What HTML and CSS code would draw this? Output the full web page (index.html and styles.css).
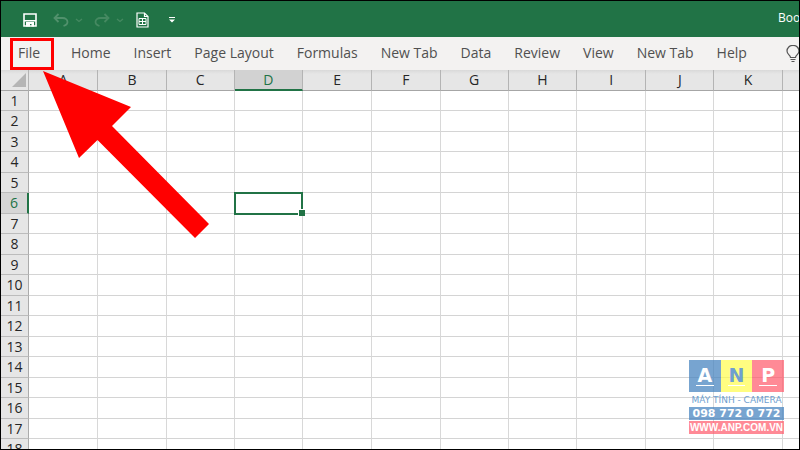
FILE: index.html
```html
<!DOCTYPE html>
<html lang="en">
<head>
<meta charset="utf-8">
<title>Spreadsheet</title>
<link rel="stylesheet" href="styles.css">
</head>
<body>
<div class="window">
  <header class="titlebar">
    <div class="quick">
      <button class="tool save" aria-label="Save"><svg width="14" height="14" viewBox="0 0 14 14"><path d="M1 1h12v12H1z" fill="none" stroke="#fff" stroke-width="1.600"/><path d="M1 7h12v1.500H1zM3 9h8v4.500H8.500V11H7v2.500H3z" fill="#fff"/></svg></button>
      <button class="tool undo" aria-label="Undo"><svg width="16" height="14" viewBox="0 0 16 14"><path d="M5.500 1L1.500 5l4 4M2 5h7.500c3 0 5 1.800 5 4 0 1.800-1.500 3.200-4 4" fill="none" stroke="#51916c" stroke-width="1.800"/></svg></button>
      <button class="tool more" aria-label="Undo list"><svg width="8" height="5" viewBox="0 0 8 5"><path d="M1 1l3 2.500L7 1" fill="none" stroke="#458961" stroke-width="1.300"/></svg></button>
      <button class="tool redo" aria-label="Redo"><svg width="16" height="14" viewBox="0 0 16 14"><path d="M10.500 1l4 4-4 4M14 5H6.500c-3 0-5 1.800-5 4 0 1.800 1.500 3.200 4 4" fill="none" stroke="#458961" stroke-width="1.800"/></svg></button>
      <button class="tool more" aria-label="Redo list"><svg width="8" height="5" viewBox="0 0 8 5"><path d="M1 1l3 2.500L7 1" fill="none" stroke="#458961" stroke-width="1.300"/></svg></button>
      <button class="tool new" aria-label="Sheet"><svg width="13" height="16" viewBox="0 0 13 16"><path d="M1 1h7.500L12 4.500V15H1zM8.500 1v3.500H12" fill="none" stroke="#fff" stroke-width="1.200"/><path d="M3 6.500h7v6H3zM3 9.500h7M6.500 6.500v6" fill="none" stroke="#fff"/></svg></button>
      <button class="tool custom" aria-label="Customize toolbar"><svg width="6" height="6" viewBox="0 0 6 6"><path d="M0 0h6v1H0zM0 2.500h6L3 5.500z" fill="#fff"/></svg></button>
    </div>
    <span class="book">Boo</span>
  </header>
  <nav class="ribbon">
    <button class="tab file">File</button>
    <button class="tab">Home</button>
    <button class="tab">Insert</button>
    <button class="tab">Page Layout</button>
    <button class="tab">Formulas</button>
    <button class="tab">New Tab</button>
    <button class="tab">Data</button>
    <button class="tab">Review</button>
    <button class="tab">View</button>
    <button class="tab">New Tab</button>
    <button class="tab">Help</button>
    <button class="tool bulb" aria-label="Tell me"><svg width="14" height="18" viewBox="0 0 14 18"><path d="M4.500 12.500C4.500 10 1 9.500 1 6a5.500 5.200 0 0 1 12 0c0 3.500-3.500 4-3.500 6.500zM4.500 14.500h5M5.500 16.500h3" fill="none" stroke="#555" stroke-width="1.200"/></svg></button>
  </nav>
  <main class="sheet">
    <table class="grid">
      <thead><tr><th class="corner"><svg width="14" height="14" viewBox="0 0 14 14"><path d="M14 0v14H0z" fill="#b5b5b5"/></svg></th><th>A</th><th>B</th><th>C</th><th class="current">D</th><th>E</th><th>F</th><th>G</th><th>H</th><th>I</th><th>J</th><th>K</th><th></th></tr></thead>
      <tbody id="rows"></tbody>
    </table>
  </main>
  <svg class="arrow" width="170" height="170" viewBox="0 0 170 170" aria-hidden="true"><path d="M0 0L88 36 69 55 166 153 152 167 54.500 69 36 87z" fill="#f00"/></svg>
  <aside class="brand">
    <div class="blocks"><span class="a"><b>A</b></span><span class="n"><b>N</b></span><span class="p"><b>P</b></span></div>
    <div class="tagline">MÁY TÍNH - CAMERA</div>
    <div class="phone">098 772 0 772</div>
    <div class="site">WWW.ANP.COM.VN</div>
  </aside>
</div>
<script src="script.js"></script>
</body>
</html>
```
FILE: styles.css
```css
* { box-sizing: border-box; }

body {
  margin: 0;
  background: #000;
  font-family: "Open Sans", "Noto Sans", sans-serif;
}

button {
  padding: 0;
  border: 0;
  background: none;
  font: inherit;
  color: inherit;
}

.window {
  position: relative;
  display: flex;
  flex-direction: column;
  height: 100vh;
  border: 1px solid #000;
  overflow: hidden;
  background: #fff;
}

.titlebar {
  display: flex;
  flex: none;
  align-items: center;
  justify-content: space-between;
  height: 36px;
  padding-left: 22px;
  background: #217346;
  color: #fff;
}

.quick {
  display: flex;
  align-items: center;
  padding-top: 2px;
}

.tool { display: flex; flex: none; }
.undo { margin-left: 16px; }
.more { margin-left: 6px; }
.redo { margin-left: 11px; }
.new { margin-left: 12px; }
.custom { margin-left: 20px; }

.book {
  width: 21px;
  overflow: hidden;
  font-size: 12px;
  line-height: 18px;
  padding-bottom: 2px;
}

.ribbon {
  display: flex;
  flex: none;
  align-items: center;
  height: 33px;
  padding-left: 9px;
  background: #f3f2f1;
  color: #505050;
  font-size: 14px;
  line-height: 18px;
}

.tab {
  flex: none;
  height: 32px;
  padding: 0 12px 2px 11px;
  white-space: nowrap;
}

.file {
  width: 44px;
  margin-right: 6px;
  padding: 0 0 2px 5px;
  border: 3px solid #f00;
  text-align: left;
}

.bulb { margin-left: 27px; }

.sheet {
  flex: 1;
  min-height: 0;
  overflow: hidden;
}

.grid {
  width: 850px;
  table-layout: fixed;
  border-collapse: separate;
  border-spacing: 0;
}

.grid th,
.grid td {
  height: 20px;
  padding: 0;
  border-right: 1px solid #d8d8d8;
  border-bottom: 1px solid #d4d4d4;
}

.grid th {
  background: #e6e6e6;
  color: #262626;
  font-size: 14px;
  font-weight: 400;
  line-height: 18px;
}

.grid thead th {
  width: 68px;
  height: 21px;
  border-right-color: #b4b4b4;
  border-bottom-color: #a6a6a6;
  background: linear-gradient(#d9d9d9, #e6e6e6 4px);
}

.grid thead th:nth-child(4n + 2) { width: 69px; }
.grid tbody tr:nth-child(even) > * { height: 21px; }

.grid tbody th {
  border-right-color: #ababab;
  border-bottom-color: #bcbcbc;
}

.grid thead .corner {
  width: 28px;
  text-align: right;
  padding-right: 2px;
}

.corner svg { display: block; margin-left: auto; }

.grid thead .current {
  background: #d2d2d2;
  border-bottom: 2px solid #217346;
  color: #217346;
}

.grid tbody .current {
  background: #d6d6d6;
  border-right: 2px solid #217346;
  color: #217346;
}

.selected { position: relative; }

.selected::before {
  content: "";
  position: absolute;
  inset: -1px -1px -2px -1px;
  border: 2px solid #217346;
}

.selected::after {
  content: "";
  position: absolute;
  right: -3px;
  bottom: -3px;
  width: 6px;
  height: 6px;
  border: 1px solid #fff;
  border-width: 1px 0 0 1px;
  background: #217346;
}

.arrow {
  position: absolute;
  left: 42px;
  top: 70px;
}

.brand {
  position: absolute;
  right: 15px;
  bottom: 15px;
  width: 95px;
  color: #6f9fd0;
  font-family: "DejaVu Sans", sans-serif;
  font-weight: 700;
  text-align: center;
  white-space: nowrap;
}

.blocks { display: grid; grid-template-columns: repeat(3, 1fr); }

.blocks span {
  height: 32px;
  padding: 5px 7px 0;
  color: #fff;
  font-size: 19px;
  line-height: 20px;
}

.blocks b {
  display: block;
  border-bottom: 1px solid #fff;
}

.blocks .a { background: rgba(74, 134, 192, 0.75); }
.blocks .n { background: rgba(255, 252, 75, 0.7); color: #6f9fd0; }
.blocks .p { background: rgba(255, 89, 105, 0.7); }

.tagline {
  height: 15px;
  font-family: "DejaVu Sans", sans-serif;
  font-size: 9px;
  font-weight: 400;
  line-height: 17px;
}

.phone,
.site {
  height: 13px;
  color: #fff;
  line-height: 13px;
}

.phone {
  margin-bottom: 1px;
  background: rgba(74, 134, 192, 0.75);
  font-size: 11px;
}

.site {
  background: rgba(255, 89, 105, 0.7);
  font-family: "Liberation Sans", sans-serif;
  font-size: 10px;
}
```
FILE: script.js
```js
const body = document.getElementById("rows");
for (let r = 1; r <= 18; r++) {
  const row = body.insertRow();
  const head = document.createElement("th");
  head.textContent = r;
  if (r === 6) head.className = "current";
  row.append(head);
  for (let c = 1; c <= 12; c++) {
    const cell = row.insertCell();
    if (r === 6 && c === 4) cell.className = "selected";
  }
}
```
